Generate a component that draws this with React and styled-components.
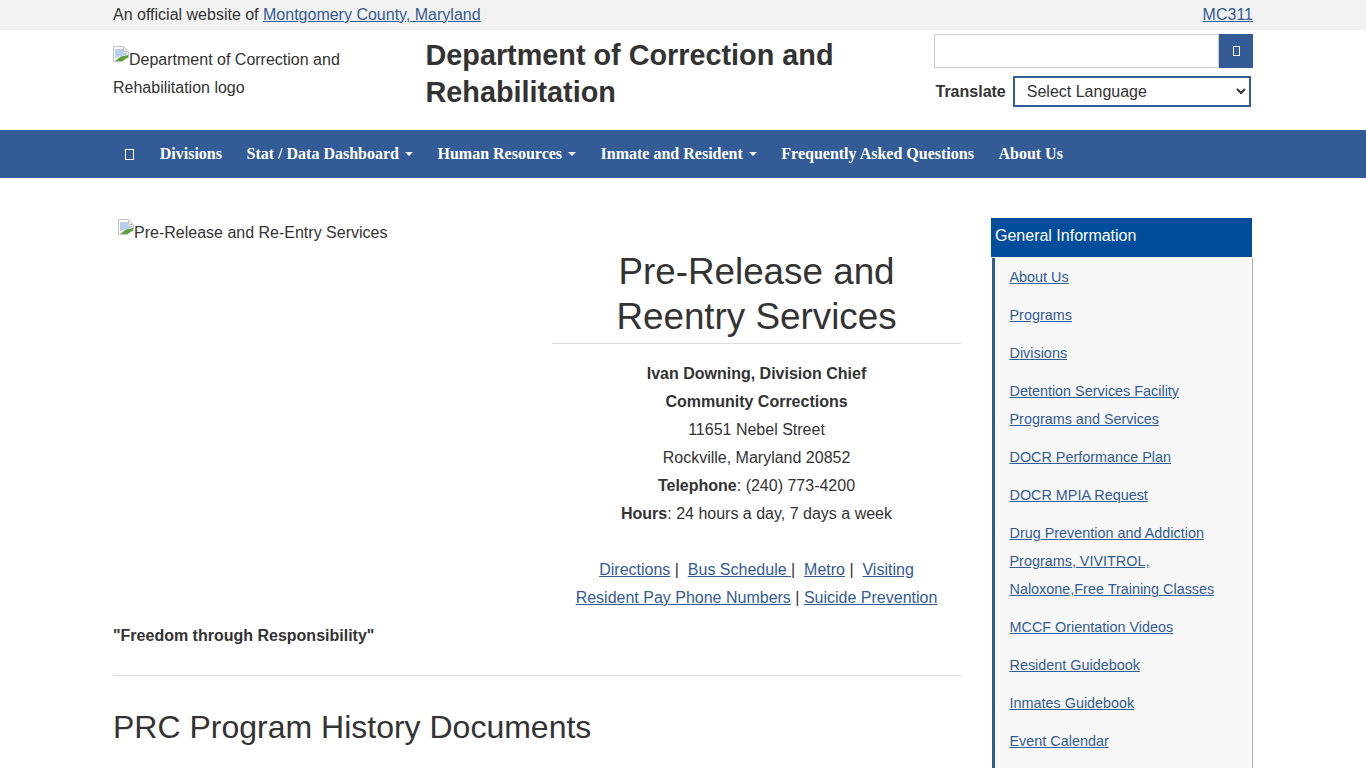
import styled, { createGlobalStyle } from 'styled-components';

const GlobalStyle = createGlobalStyle`
  * { box-sizing: border-box; }
  body {
    margin: 0;
    background: #fff;
    color: #333;
    font-family: 'Liberation Sans', Arial, sans-serif;
    font-size: 16px;
    line-height: 28px;
  }
  a { color: #335b96; text-decoration: underline; }
`;

const Container = styled.div`
  width: 1170px;
  margin: 0 auto;
  padding: 0 15px;
`;

const TopBar = styled.div`
  height: 30px;
  background: #f2f2f2;
`;

const TopRow = styled.div`
  display: flex;
  justify-content: space-between;
  line-height: 29px;
`;

const Header = styled.div`
  height: 100px;
`;

const HeaderRow = styled.div`
  display: flex;
`;

const LogoCol = styled.div`
  width: 312.5px;
  padding: 16px 40px 0 0;
`;

const TitleCol = styled.div`
  width: 508px;
`;

const SiteTitle = styled.h1`
  margin: 7px 0 0;
  font-size: 28.8px;
  line-height: 37px;
  font-weight: 700;
`;

const ToolsCol = styled.div`
  width: 319.5px;
  padding-top: 4px;
`;

const SearchRow = styled.div`
  display: flex;
  height: 34px;
`;

const SearchInput = styled.input`
  flex: 1;
  min-width: 0;
  height: 34px;
  border: 1px solid #ccc;
  background: #fff;
  padding: 6px 12px;
`;

const SearchButton = styled.button`
  width: 34px;
  height: 34px;
  border: 0;
  padding: 0;
  background: #335b96;
  display: flex;
  align-items: center;
  justify-content: center;
`;

const TranslateRow = styled.div`
  display: flex;
  align-items: center;
  margin-top: 8px;
`;

const TranslateLabel = styled.label`
  font-weight: 700;
  margin: 0 7px 0 2px;
`;

const LanguageSelect = styled.select`
  width: 238px;
  height: 31px;
  border: 2px solid #335b96;
  border-radius: 0;
  background: #fff;
  color: #333;
  padding: 0 8px;
  font-family: inherit;
  font-size: 16px;
`;

const Nav = styled.nav`
  height: 48px;
  background: #335b96;
`;

const NavList = styled.div`
  display: flex;
  align-items: center;
  height: 48px;
`;

const NavItem = styled.a`
  display: flex;
  align-items: center;
  color: #fff;
  font-family: 'Liberation Serif', 'Times New Roman', serif;
  font-size: 16px;
  font-weight: 700;
  text-decoration: none;
  padding: 0 12.25px;
  white-space: nowrap;
`;

const HomeItem = styled(NavItem)`
  padding-right: 13.25px;
`;

const Caret = styled.span`
  display: inline-block;
  width: 0;
  height: 0;
  margin-left: 6px;
  border-top: 4px solid #fff;
  border-left: 4px solid transparent;
  border-right: 4px solid transparent;
`;

const Page = styled.div`
  display: flex;
  justify-content: space-between;
  padding-top: 40px;
`;

const Main = styled.main`
  width: 848px;
`;

const Intro = styled.div`
  display: flex;
`;

const PhotoCol = styled.div`
  width: 439px;
  padding: 1px 0 0 5px;
`;

const InfoCol = styled.div`
  width: 409px;
  text-align: center;
`;

const PageTitle = styled.h2`
  margin: 31px 0 0;
  padding-bottom: 4px;
  border-bottom: 1px solid #ddd;
  font-size: 36.8px;
  line-height: 45px;
  font-weight: 400;
`;

const InfoBlock = styled.div`
  margin-top: 16px;
`;

const Line = styled.div``;

const LinkBlock = styled.div`
  margin-top: 28px;
`;

const Motto = styled.div`
  font-weight: 700;
  margin-top: 10px;
`;

const Rule = styled.hr`
  margin: 25px 0 0;
  border: 0;
  border-top: 1px solid #ddd;
`;

const SectionTitle = styled.h2`
  margin: 31px 0 0;
  font-size: 32px;
  line-height: 40px;
  font-weight: 400;
`;

const Side = styled.aside`
  width: 261px;
  margin-right: 1px;
`;

const SideHead = styled.div`
  height: 39px;
  background: #004d9c;
  color: #fff;
  padding: 0 4px;
  line-height: 35px;
`;

const SideList = styled.div`
  margin: 1px -1px 0 1px;
  padding: 0 15px 10px 14.5px;
  background: #f8f8f8;
  border-left: 3px solid #335b96;
  border-right: 1px solid #b0b0b0;
  font-size: 14.4px;
`;

const SideItem = styled.div`
  padding: 5px 0;
`;

const BrokenIcon = styled.svg`
  vertical-align: 3px;
`;

const sideLinks = [
  'About Us',
  'Programs',
  'Divisions',
  'Detention Services Facility Programs and Services',
  'DOCR Performance Plan',
  'DOCR MPIA Request',
  'Drug Prevention and Addiction Programs, VIVITROL, Naloxone,Free Training Classes',
  'MCCF Orientation Videos',
  'Resident Guidebook',
  'Inmates Guidebook',
  'Event Calendar',
];

const navLinks = [
  { label: 'Divisions' },
  { label: 'Stat / Data Dashboard', menu: true },
  { label: 'Human Resources', menu: true },
  { label: 'Inmate and Resident', menu: true },
  { label: 'Frequently Asked Questions' },
  { label: 'About Us' },
];

const MissingGlyph = ({ width, height }) => (
  <svg width={width} height={height} viewBox={`0 0 ${width} ${height}`} fill="none">
    <rect x="0.5" y="0.5" width={width - 1} height={height - 1} stroke="#fff" />
  </svg>
);

const BrokenImage = () => (
  <BrokenIcon width="16" height="16" viewBox="0 0 16 16">
    <path d="M0.5 15.5V0.5H10.5L15.5 5.5V15.5Z" fill="#fff" stroke="#c4c4c4" />
    <path d="M2 3H10V6.5H14V8.5L2 12Z" fill="#b9cdf0" />
    <path d="M10.5 1V5.5H15" fill="#eee" stroke="#c4c4c4" />
    <path d="M2 15L8 10.5L15 9V11.5L9.5 15Z" fill="#5d9e3e" />
    <path d="M9.5 16L16 11.5V16Z" fill="#fff" />
  </BrokenIcon>
);

const App = () => (
  <>
    <GlobalStyle />
    <TopBar>
      <Container>
        <TopRow>
          <span>An official website of <a href="#">Montgomery County, Maryland</a></span>
          <a href="#">MC311</a>
        </TopRow>
      </Container>
    </TopBar>
    <Header>
      <Container>
        <HeaderRow>
          <LogoCol>
            <BrokenImage />Department of Correction and Rehabilitation logo
          </LogoCol>
          <TitleCol>
            <SiteTitle>Department of Correction and Rehabilitation</SiteTitle>
          </TitleCol>
          <ToolsCol>
            <SearchRow>
              <SearchInput aria-label="Search" />
              <SearchButton aria-label="Search"><MissingGlyph width={7} height={10} /></SearchButton>
            </SearchRow>
            <TranslateRow>
              <TranslateLabel>Translate</TranslateLabel>
              <LanguageSelect defaultValue="">
                <option value="">Select Language</option>
              </LanguageSelect>
            </TranslateRow>
          </ToolsCol>
        </HeaderRow>
      </Container>
    </Header>
    <Nav>
      <Container>
        <NavList>
          <HomeItem href="#"><MissingGlyph width={9} height={11} /></HomeItem>
          {navLinks.map((link) => (
            <NavItem href="#" key={link.label}>
              {link.label}
              {link.menu && <Caret />}
            </NavItem>
          ))}
        </NavList>
      </Container>
    </Nav>
    <Container>
      <Page>
        <Main>
          <Intro>
            <PhotoCol>
              <BrokenImage />Pre-Release and Re-Entry Services
            </PhotoCol>
            <InfoCol>
              <PageTitle>Pre-Release and<br />Reentry Services</PageTitle>
              <InfoBlock>
                <Line><b>Ivan Downing, Division Chief</b></Line>
                <Line><b>Community Corrections</b></Line>
                <Line>11651 Nebel Street</Line>
                <Line>Rockville, Maryland 20852</Line>
                <Line><b>Telephone</b>: (240) 773-4200</Line>
                <Line><b>Hours</b>: 24 hours a day, 7 days a week</Line>
              </InfoBlock>
              <LinkBlock>
                <Line>
                  <a href="#">Directions</a> |&nbsp; <a href="#">Bus Schedule </a>|&nbsp; <a href="#">Metro</a> |&nbsp; <a href="#">Visiting</a>
                </Line>
                <Line>
                  <a href="#">Resident Pay Phone Numbers</a> | <a href="#">Suicide Prevention</a>
                </Line>
              </LinkBlock>
            </InfoCol>
          </Intro>
          <Motto>"Freedom through Responsibility"</Motto>
          <Rule />
          <SectionTitle>PRC Program History Documents</SectionTitle>
        </Main>
        <Side>
          <SideHead>General Information</SideHead>
          <SideList>
            {sideLinks.map((label) => (
              <SideItem key={label}><a href="#">{label}</a></SideItem>
            ))}
          </SideList>
        </Side>
      </Page>
    </Container>
  </>
);

export default App;
